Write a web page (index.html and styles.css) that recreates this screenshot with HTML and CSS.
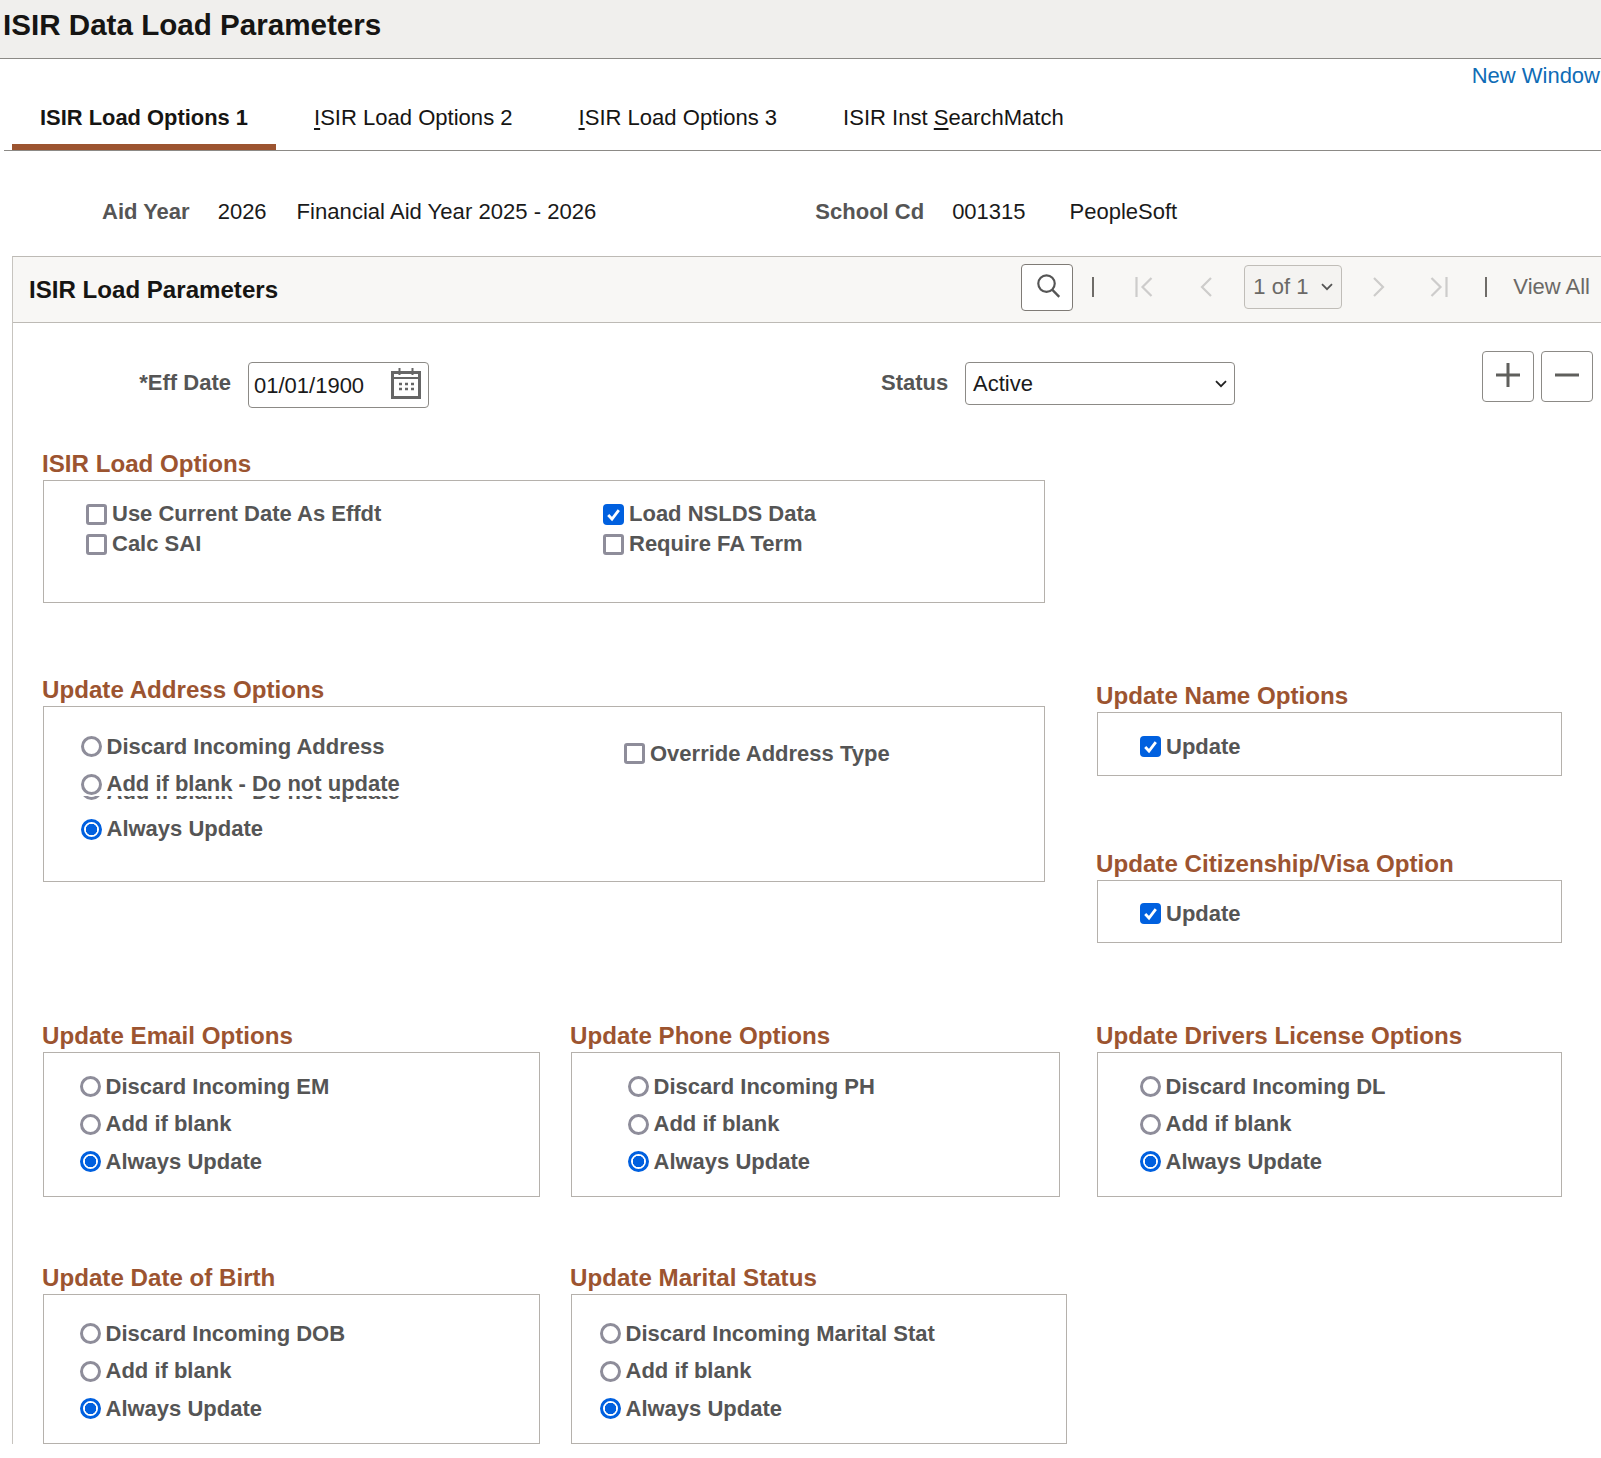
FILE: index.html
```html
<!DOCTYPE html>
<html lang="en">
<head>
<meta charset="utf-8">
<title>ISIR Data Load Parameters</title>
<link rel="stylesheet" href="styles.css">
</head>
<body>
<header class="page-head"><h1 class="page-title">ISIR Data Load Parameters</h1></header>
<div class="new-window"><a class="link" href="#">New Window</a></div>
<nav class="tabs">
  <a class="tab tab-active" href="#">ISIR Load Options 1</a>
  <a class="tab" href="#"><u>I</u>SIR Load Options 2</a>
  <a class="tab" href="#"><u>I</u>SIR Load Options 3</a>
  <a class="tab" href="#">ISIR Inst <u>S</u>earchMatch</a>
</nav>
<div class="info">
  <span class="info-label lbl-aid">Aid Year</span>
  <span class="info-val val-year">2026</span>
  <span class="info-val val-desc">Financial Aid Year 2025 - 2026</span>
  <span class="info-label lbl-school">School Cd</span>
  <span class="info-val val-code">001315</span>
  <span class="info-val val-name">PeopleSoft</span>
</div>
<section class="panel">
  <div class="panel-head">
    <h2 class="panel-title">ISIR Load Parameters</h2>
    <div class="pager">
      <button class="search-btn" type="button" aria-label="Search">
        <svg width="51" height="45" viewBox="0 0 51 45"><circle cx="25" cy="18.5" r="8.4" fill="none" stroke="#555" stroke-width="2.2"/><path d="M31 25l7 7" fill="none" stroke="#555" stroke-width="2.4"/></svg>
      </button>
      <span class="sep sep-a"></span>
      <svg class="pg pg-first" width="18" height="20" viewBox="0 0 18 20"><path d="M1.5 0v20M16.5 1l-9 9 9 9" fill="none" stroke="#cdcccb" stroke-width="2.2"/></svg>
      <svg class="pg pg-prev" width="12" height="20" viewBox="0 0 12 20"><path d="M11 1l-9 9 9 9" fill="none" stroke="#cdcccb" stroke-width="2.2"/></svg>
      <div class="pg-select"><span>1 of 1</span><svg width="12" height="8" viewBox="0 0 12 8"><path d="M1 1.2l5 5 5-5" fill="none" stroke="#555" stroke-width="1.8"/></svg></div>
      <svg class="pg pg-next" width="12" height="20" viewBox="0 0 12 20"><path d="M1 1l9 9-9 9" fill="none" stroke="#cdcccb" stroke-width="2.2"/></svg>
      <svg class="pg pg-last" width="18" height="20" viewBox="0 0 18 20"><path d="M16.5 0v20M1.5 1l9 9-9 9" fill="none" stroke="#cdcccb" stroke-width="2.2"/></svg>
      <span class="sep sep-b"></span>
      <a class="view-all" href="#">View All</a>
    </div>
  </div>
  <div class="panel-body">
    <div class="eff-row">
      <span class="field-label lbl-eff">*Eff Date</span>
      <div class="date-input"><span>01/01/1900</span>
        <svg class="cal" width="30" height="31" viewBox="0 0 30 31"><rect x="1.5" y="4.5" width="27" height="25" fill="none" stroke="#666" stroke-width="3"/><path d="M2 10h26" stroke="#666" stroke-width="2"/><path d="M8.5 0v7M21.5 0v7" stroke="#666" stroke-width="2"/><path d="M8 16h3M14 16h3M20 16h3M8 21h3M14 21h3M20 21h3" stroke="#666" stroke-width="2.4"/></svg>
      </div>
      <span class="field-label lbl-status">Status</span>
      <div class="select-box"><span>Active</span><svg width="12" height="8" viewBox="0 0 12 8"><path d="M1 1.2l5 5 5-5" fill="none" stroke="#222" stroke-width="1.8"/></svg></div>
      <button class="sq-btn sq-add" type="button" aria-label="Add"><svg width="26" height="26" viewBox="0 0 26 26"><path d="M1 13h24M13 1v24" stroke="#5f5f5c" stroke-width="3"/></svg></button>
      <button class="sq-btn sq-del" type="button" aria-label="Delete"><svg width="26" height="26" viewBox="0 0 26 26"><path d="M1 13h24" stroke="#5f5f5c" stroke-width="3"/></svg></button>
    </div>

    <div class="group group-load">
      <h3 class="group-title">ISIR Load Options</h3>
      <div class="box box-load">
        <label class="opt-c"><span class="cb"></span>Use Current Date As Effdt</label>
        <label class="opt-c"><span class="cb cb-on"><svg width="21" height="21" viewBox="0 0 21 21"><path d="M5.2 11l3.8 4 6.8-8.8" fill="none" stroke="#fff" stroke-width="2.8"/></svg></span>Load NSLDS Data</label>
        <label class="opt-c"><span class="cb"></span>Calc SAI</label>
        <label class="opt-c"><span class="cb"></span>Require FA Term</label>
      </div>
    </div>

    <div class="row-address">
      <div class="group group-address">
        <h3 class="group-title">Update Address Options</h3>
        <div class="box box-address">
          <div class="addr-radios">
            <label class="opt"><span class="rd"></span>Discard Incoming Address</label>
            <label class="opt opt-tight"><span class="rd"></span>Add if blank - Do not update</label>
            <div class="ghost" aria-hidden="true"><span class="opt opt-tight ghost-inner"><span class="rd"></span><span class="ghost-text">Add if blank - Do not update</span></span></div>
            <label class="opt opt-last"><span class="rd rd-on"></span>Always Update</label>
          </div>
          <label class="opt-c opt-override"><span class="cb"></span>Override Address Type</label>
        </div>
      </div>
      <div class="side">
        <div class="group">
          <h3 class="group-title">Update Name Options</h3>
          <div class="box box-update box-update-a">
            <label class="opt-c"><span class="cb cb-on"><svg width="21" height="21" viewBox="0 0 21 21"><path d="M5.2 11l3.8 4 6.8-8.8" fill="none" stroke="#fff" stroke-width="2.8"/></svg></span>Update</label>
          </div>
        </div>
        <div class="group group-citizen">
          <h3 class="group-title">Update Citizenship/Visa Option</h3>
          <div class="box box-update box-update-b">
            <label class="opt-c"><span class="cb cb-on"><svg width="21" height="21" viewBox="0 0 21 21"><path d="M5.2 11l3.8 4 6.8-8.8" fill="none" stroke="#fff" stroke-width="2.8"/></svg></span>Update</label>
          </div>
        </div>
      </div>
    </div>

    <div class="row-triple">
      <div class="group w-email">
        <h3 class="group-title">Update Email Options</h3>
        <div class="box box-radio pad-email">
          <label class="opt"><span class="rd"></span>Discard Incoming EM</label>
          <label class="opt"><span class="rd"></span>Add if blank</label>
          <label class="opt"><span class="rd rd-on"></span>Always Update</label>
        </div>
      </div>
      <div class="group w-phone">
        <h3 class="group-title">Update Phone Options</h3>
        <div class="box box-radio pad-phone">
          <label class="opt"><span class="rd"></span>Discard Incoming PH</label>
          <label class="opt"><span class="rd"></span>Add if blank</label>
          <label class="opt"><span class="rd rd-on"></span>Always Update</label>
        </div>
      </div>
      <div class="group w-dl">
        <h3 class="group-title">Update Drivers License Options</h3>
        <div class="box box-radio pad-dl">
          <label class="opt"><span class="rd"></span>Discard Incoming DL</label>
          <label class="opt"><span class="rd"></span>Add if blank</label>
          <label class="opt"><span class="rd rd-on"></span>Always Update</label>
        </div>
      </div>
    </div>

    <div class="row-double">
      <div class="group w-email">
        <h3 class="group-title">Update Date of Birth</h3>
        <div class="box box-radio box-tall pad-email">
          <label class="opt"><span class="rd"></span>Discard Incoming DOB</label>
          <label class="opt"><span class="rd"></span>Add if blank</label>
          <label class="opt"><span class="rd rd-on"></span>Always Update</label>
        </div>
      </div>
      <div class="group w-marital">
        <h3 class="group-title">Update Marital Status</h3>
        <div class="box box-radio box-tall pad-marital">
          <label class="opt"><span class="rd"></span>Discard Incoming Marital Stat</label>
          <label class="opt"><span class="rd"></span>Add if blank</label>
          <label class="opt"><span class="rd rd-on"></span>Always Update</label>
        </div>
      </div>
    </div>
  </div>
</section>
</body>
</html>
```
FILE: styles.css
```css
* { box-sizing: border-box; }
html, body { margin: 0; padding: 0; }
body {
  width: 1601px;
  height: 1458px;
  overflow: hidden;
  background: #fff;
  color: #1a1a1a;
  font-family: "Liberation Sans", Arial, sans-serif;
  font-size: 22px;
}
a { color: inherit; text-decoration: none; }

.page-head {
  height: 59px;
  background: #f0efed;
  border-bottom: 1px solid #8c8a86;
  padding: 0 0 8px 3px;
  display: flex;
  align-items: center;
}
.page-title { margin: 0; font-size: 29.6px; font-weight: 700; color: #161513; }

.new-window { height: 32px; line-height: 34px; text-align: right; padding-right: 1px; }
.link { color: #0f6cb6; }

.tabs {
  display: flex;
  gap: 10px;
  height: 60px;
  margin-left: 4px;
  padding-left: 8px;
  border-bottom: 1px solid #8c8a86;
}
.tab { height: 59px; line-height: 54px; padding: 0 28px; color: #161513; font-size: 22.05px; }
.tab-active { font-size: 21.9px; font-weight: 700; border-bottom: 6px solid #9c5430; }
.tab u { text-underline-offset: 3px; }

.info { display: flex; align-items: center; height: 30px; margin: 46px 0 29px; padding-left: 102px; }
.info-label { font-weight: 700; color: #555; }
.val-year { margin-left: 28px; }
.val-desc { margin-left: 30px; font-size: 22.1px; }
.lbl-school { margin-left: 219px; }
.val-code { margin-left: 28px; }
.val-name { margin-left: 44px; }

.panel { margin-left: 12px; border-left: 1px solid #c7c4bf; border-top: 1px solid #bdbab5; }
.panel-head {
  display: flex;
  align-items: center;
  justify-content: space-between;
  height: 66px;
  background: #f8f7f5;
  border-bottom: 1px solid #bdbab5;
  padding: 0 11px 0 16px;
}
.panel-title { margin: 0; font-size: 24.1px; font-weight: 700; color: #161513; }
.pager { display: flex; align-items: center; margin-bottom: 5px; }
.search-btn {
  width: 52px; height: 47px; padding: 0;
  background: #fff;
  border: 1px solid #7f7b76;
  border-radius: 4px;
  display: flex; align-items: center; justify-content: center;
}
.sep { width: 2px; height: 20px; background: #6f6c68; }
.sep-a { margin-left: 19px; }
.pg { display: block; }
.pg-first { margin-left: 41px; }
.pg-prev { margin-left: 47px; }
.pg-select {
  display: flex; align-items: center; justify-content: space-between;
  width: 98px; height: 44px; margin-left: 32px; padding: 0 8px 0 8px;
  background: #f4f3f1; border: 1px solid #c0bdb8; border-radius: 4px;
  color: #6b6966;
}
.pg-next { margin-left: 31px; }
.pg-last { margin-left: 45px; }
.sep-b { margin-left: 37px; }
.view-all { margin-left: 26px; color: #6b6966; }

.panel-body { padding-left: 30px; }
.eff-row { display: flex; align-items: flex-start; height: 56px; margin-top: 28px; }
.field-label { font-weight: 700; color: #555; margin-top: 19px; }
.lbl-eff { width: 188px; text-align: right; }
.date-input {
  display: flex; align-items: center; justify-content: space-between;
  width: 181px; height: 46px; margin: 11px 0 0 17px; padding: 0 7px 0 5px;
  border: 1px solid #8c8a86; border-radius: 4px;
}
.date-input span { margin-top: 1px; }
.cal { margin-bottom: 4px; }
.lbl-status { margin-left: 452px; width: 66px; }
.select-box {
  display: flex; align-items: center; justify-content: space-between;
  width: 270px; height: 43px; margin: 11px 0 0 18px; padding: 0 7px 0 7px;
  border: 1px solid #8c8a86; border-radius: 4px;
}
.sq-btn {
  width: 52px; height: 51px; padding: 0 0 3px;
  background: #fff; border: 1px solid #8c8a86; border-radius: 4px;
  display: flex; align-items: center; justify-content: center;
}
.sq-add { margin-left: 247px; }
.sq-del { margin-left: 7px; }

.group-title { margin: 0 0 3px -1px; height: 26px; line-height: 26px; font-size: 24.15px; font-weight: 700; color: #9c5430; white-space: nowrap; }
.box { border: 1.5px solid #b5b1ac; }

.group-load { margin-top: 44px; width: 1002px; }
.box-load {
  display: grid; grid-template-columns: 517px 1fr; grid-auto-rows: 30px;
  height: 123px; padding: 18px 0 0 42px;
}
.opt-c { display: flex; align-items: center; gap: 5px; font-size: 22px; font-weight: 700; color: #555; white-space: nowrap; }
.cb {
  flex: none; width: 21px; height: 21px;
  border: 3px solid #8e8d9a; border-radius: 3px; background: #fff;
}
.cb-on { border: none; background: #0060df; border-radius: 4px; display: block; }
.cb-on svg { display: block; }
.opt { display: flex; align-items: center; gap: 4.5px; height: 37.5px; font-size: 22px; font-weight: 700; color: #555; white-space: nowrap; }
.rd {
  flex: none; width: 21px; height: 21px;
  border: 3px solid #8e8d9a; border-radius: 50%; background: #fff;
}
.rd-on { border-color: #0060df; background: radial-gradient(circle, #0060df 0 5.4px, #fff 6px); }

.row-address { display: flex; margin-top: 74px; }
.group-address { width: 1002px; }
.box-address { display: flex; height: 176px; padding: 21px 0 0 37px; }
.addr-radios { width: 543px; }
.opt-tight { height: 21px; margin-top: 8px; }
.ghost { height: 6px; margin-top: 1px; overflow: hidden; }
.ghost-inner { margin-top: -17px; }
.ghost-text { margin-top: 6px; }
.opt-last { margin-top: 9px; }
.opt-override { height: 21px; margin-top: 15px; }
.side { width: 465px; margin: 6px 0 0 52px; }
.box-update { padding: 23px 0 0 42px; }
.box-update .opt-c { height: 21px; }
.box-update-a { height: 64px; }
.box-update-b { height: 63px; padding-top: 22px; }
.group-citizen { margin-top: 75px; }

.row-triple { display: flex; margin-top: 80px; }
.row-double { display: flex; margin-top: 68px; }
.w-email { width: 497px; }
.w-phone { width: 489px; margin-left: 31px; }
.w-dl { width: 465px; margin-left: 37px; }
.w-marital { width: 496px; margin-left: 31px; }
.box-radio { height: 145px; padding-top: 15px; }
.box-tall { height: 150px; padding-top: 20px; }
.pad-email { padding-left: 36px; }
.pad-phone { padding-left: 56px; }
.pad-dl { padding-left: 42px; }
.pad-marital { padding-left: 28px; }
```
